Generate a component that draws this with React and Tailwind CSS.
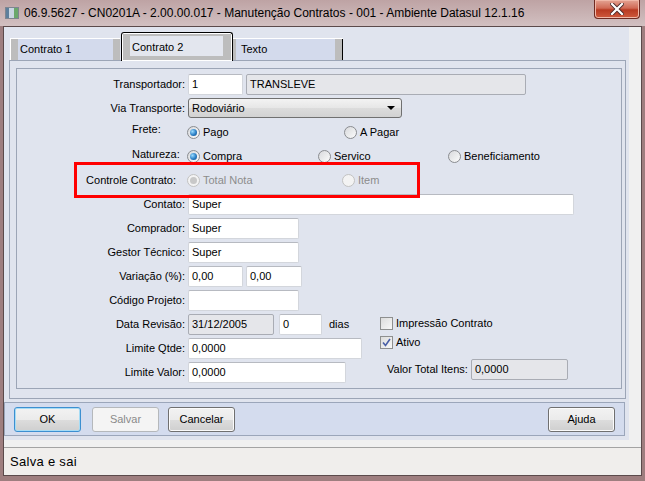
import React from 'react';

const sans = { fontFamily: '"Liberation Sans", Arial, sans-serif' };

function Radio({ checked, disabled }) {
  return (
    <span
      className={
        disabled
          ? 'flex h-[13px] w-[13px] shrink-0 items-center justify-center rounded-full border border-[#c2c2c2] bg-[#f3f3f3]'
          : 'flex h-[13px] w-[13px] shrink-0 items-center justify-center rounded-full border border-[#8a8c90] bg-[linear-gradient(135deg,#d8d9dc,#fbfbfb)]'
      }
    >
      {checked && (
        <span
          className={
            disabled
              ? 'h-[7px] w-[7px] rounded-full bg-[#c8c8c8]'
              : 'h-[7px] w-[7px] rounded-full bg-[radial-gradient(circle_at_35%_35%,#9bdcff,#2a7fc6_55%,#12457e)]'
          }
        />
      )}
    </span>
  );
}

function Option({ label, checked, disabled, className = '' }) {
  return (
    <span className={'flex items-center gap-[3px] ' + className}>
      <Radio checked={checked} disabled={disabled} />
      <span className={disabled ? 'text-[#8c8c8c]' : 'text-black'}>{label}</span>
    </span>
  );
}

function Check({ checked }) {
  return (
    <span className="flex h-[13px] w-[13px] shrink-0 items-center justify-center border border-[#8e8f8f] bg-[linear-gradient(135deg,#dcdcdc,#f8f8f8)]">
      {checked && (
        <svg width="9" height="9" viewBox="0 0 9 9">
          <path d="M1 4.5 L3.5 7.5 L8 1" fill="none" stroke="#4a5fa6" strokeWidth="1.6" />
        </svg>
      )}
    </span>
  );
}

function Field({ value, className = '', disabled }) {
  return (
    <div
      className={
        (disabled
          ? 'flex h-[21px] items-center rounded-[2px] border border-[#a9acb4] bg-[#e5e6ea] pl-[3px] '
          : 'flex h-[21px] items-center rounded-[2px] border border-[#d3d6dc] border-t-[#b7bac1] bg-white pl-[3px] ') + className
      }
    >
      {value}
    </div>
  );
}

function Row({ label, labelClass = 'w-[168px] text-right', children }) {
  return (
    <div className="flex h-[24px] items-center">
      <span className={'shrink-0 ' + labelClass}>{label}</span>
      <div className="ml-[3px] flex items-center">{children}</div>
    </div>
  );
}

function Button({ children, focused, disabled }) {
  const base = 'flex h-[25px] w-[67px] items-center justify-center rounded-[3px] border text-[11px] ';
  if (disabled)
    return <div className={base + 'border-[#b5b8bb] bg-[#f4f4f4] text-[#8a8a8a]'}>{children}</div>;
  return (
    <div
      className={
        base +
        (focused
          ? 'border-[#3c8fd0] bg-[linear-gradient(180deg,#f2f2f2_0%,#ebebeb_50%,#dddddd_50%,#cfcfcf_100%)] text-black shadow-[inset_0_0_0_1px_#a6dcf5]'
          : 'border-[#707070] bg-[linear-gradient(180deg,#f2f2f2_0%,#ebebeb_50%,#dddddd_50%,#cfcfcf_100%)] text-black shadow-[inset_0_0_0_1px_#fbfbfb]')
      }
    >
      {children}
    </div>
  );
}

function Tab({ label, active, first }) {
  if (active)
    return (
      <div className="relative z-10 flex h-[29px] w-[112px] rounded-t-[3px] border border-b-0 border-black bg-white p-px">
        <div className="flex flex-1 border-[#bdbdbd] border-l-[7px] border-t-[2px] border-r-[8px] border-b-[4px] bg-[#e3e6ee] pl-[2px] pt-[3px]">
          {label}
        </div>
      </div>
    );
  return (
    <div className="mt-[3px] flex h-[23px] w-[110px] border-t border-white border-b border-b-black">
      <div className={first ? 'w-[8px] bg-[#bdbdbd] border-l border-white' : 'w-[3px] bg-[#bdbdbd]'} />
      <div className={first ? 'flex flex-1 items-center bg-[#d3daec] pl-[2px]' : 'flex flex-1 items-center bg-[#d3daec] pl-[5px]'}>{label}</div>
      <div className={first ? 'w-[7px] bg-[#bdbdbd]' : 'w-[8px] bg-[#bdbdbd] border-r border-black'} />
    </div>
  );
}

export default function App() {
  return (
    <div className="flex h-[481px] w-[645px] flex-col overflow-hidden bg-[#9e7e7f] text-[11px] text-black" style={sans}>
      {/* title bar */}
      <div className="flex h-[26px] shrink-0 items-start bg-[linear-gradient(180deg,#bea3a4,#d2c0c1)]">
        <div className="ml-[5px] mt-[7px] flex h-[12px] w-[14px] border border-[#7d8590] bg-[#eef0f2]">
          <div className="w-[3px] bg-[#5d7f9c]" />
          <div className="w-[5px] bg-[#c9d6e2]" />
          <div className="w-[4px] bg-[#6aa86c]" />
        </div>
        <span className="ml-[5px] mt-[5px] text-[12px] leading-[16px] text-black">
          06.9.5627 - CN0201A - 2.00.00.017 - Manutenção Contratos - 001 - Ambiente Datasul 12.1.16
        </span>
        <div className="ml-auto mr-[5px] flex h-[19px] w-[46px] items-center justify-center rounded-b-[4px] border border-t-0 border-[#6e2a22] bg-[linear-gradient(180deg,#e4a494_0%,#d06a55_45%,#b83a22_55%,#cf5a3e_100%)] shadow-[inset_0_0_0_1px_#f0b8a8]">
          <svg width="14" height="12" viewBox="0 0 14 12">
            <path d="M2 1 L12 11 M12 1 L2 11" stroke="#4a2a2a" strokeWidth="4" strokeLinecap="square" />
            <path d="M2 1 L12 11 M12 1 L2 11" stroke="#ffffff" strokeWidth="2.2" strokeLinecap="square" />
          </svg>
        </div>
      </div>

      {/* client area */}
      <div className="ml-[3px] mr-[3px] flex h-[450px] flex-col border border-[#5b4a4b] bg-[#f0f0f0]">
        <div className="flex">
          <div className="flex h-[413px] w-[625px] flex-col bg-[#e0e4ee]">
            {/* tabs */}
            <div className="flex h-[25px] pl-[6px] pt-[8px] box-content">
              <Tab label="Contrato 1" first />
              <div className="-mt-[3px] ml-px">
                <Tab label="Contrato 2" active />
              </div>
              <Tab label="Texto" />
            </div>

            {/* tab page */}
            <div className="ml-[5px] h-[339px] w-[617px] border border-[#9ca5b6] pl-[6px] pt-[7px]">
              <div className="relative h-[321px] w-[606px] border border-[#9ca5b6] pt-[3px]">
                <Row label="Transportador:">
                  <Field value="1" className="w-[55px]" />
                  <Field value="TRANSLEVE" className="ml-[3px] w-[280px]" disabled />
                </Row>
                <Row label="Via Transporte:">
                  <div className="flex h-[20px] w-[214px] items-center justify-between rounded-[3px] border border-[#707070] bg-[linear-gradient(180deg,#f3f3f3,#e6e6e6_50%,#dcdcdc_50%,#d2d2d2)] pl-[3px] pr-[6px]">
                    <span>Rodoviário</span>
                    <svg width="8" height="4" viewBox="0 0 8 4">
                      <path d="M0 0 H8 L4 4 Z" fill="#000" />
                    </svg>
                  </div>
                </Row>
                <Row label="Frete:" labelClass="w-[168px] pl-[115px] pb-[6px]">
                  <Option label="Pago" checked className="w-[157px] -ml-px" />
                  <Option label="A Pagar" />
                </Row>
                <Row label="Natureza:" labelClass="w-[168px] pl-[115px] pb-[4px]">
                  <Option label="Compra" checked className="w-[131px] -ml-px" />
                  <Option label="Servico" className="w-[130px]" />
                  <Option label="Beneficiamento" />
                </Row>
                <Row label="Controle Contrato:" labelClass="w-[168px] pr-[9px] text-right">
                  <Option label="Total Nota" checked disabled className="w-[155px] -ml-px" />
                  <Option label="Item" disabled />
                </Row>
                <Row label="Contato:">
                  <Field value="Super" className="w-[386px]" />
                </Row>
                <Row label="Comprador:">
                  <Field value="Super" className="w-[111px]" />
                </Row>
                <Row label="Gestor Técnico:">
                  <Field value="Super" className="w-[111px]" />
                </Row>
                <Row label="Variação (%):">
                  <Field value="0,00" className="w-[55px]" />
                  <Field value="0,00" className="ml-[3px] w-[56px]" />
                </Row>
                <Row label="Código Projeto:">
                  <Field value="" className="w-[111px]" />
                </Row>

                <div className="flex">
                  <div className="w-[363px] shrink-0">
                    <Row label="Data Revisão:">
                      <Field value="31/12/2005" className="w-[86px]" disabled />
                      <Field value="0" className="ml-[5px] w-[43px]" />
                      <span className="ml-[7px]">dias</span>
                    </Row>
                    <Row label="Limite Qtde:">
                      <Field value="0,0000" className="w-[174px]" />
                    </Row>
                    <Row label="Limite Valor:">
                      <Field value="0,0000" className="w-[158px]" />
                    </Row>
                  </div>
                  <div className="flex flex-col">
                    <div className="flex h-[22px] items-center gap-[3px]">
                      <Check />
                      <span>Impressão Contrato</span>
                    </div>
                    <div className="flex h-[16px] items-center gap-[3px]">
                      <Check checked />
                      <span>Ativo</span>
                    </div>
                    <div className="mt-[9px] flex h-[21px] items-center pl-[7px]">
                      <span>Valor Total Itens:</span>
                      <Field value="0,0000" className="ml-[3px] w-[97px]" disabled />
                    </div>
                  </div>
                </div>

                {/* highlight frame */}
                <div className="pointer-events-none absolute left-[57px] top-[93px] h-[36px] w-[346px] border-[3px] border-[#ff0000]" />
              </div>
            </div>

            {/* button bar */}
            <div className="mt-[3px] flex h-[34px] w-[621px] items-center border border-[#9ba6ba] bg-[#d4dcee] pl-[9px] pr-[9px]">
              <Button focused>OK</Button>
              <div className="ml-[11px]">
                <Button disabled>Salvar</Button>
              </div>
              <div className="ml-[9px]">
                <Button>Cancelar</Button>
              </div>
              <div className="ml-auto">
                <Button>Ajuda</Button>
              </div>
            </div>
          </div>
          <div className="flex-1" />
        </div>

        {/* status bar */}
        <div className="mt-auto flex h-[28px] items-center border-t border-[#a3a3a3] bg-[#f0eeec] pl-[6px] text-[13px] tracking-[0.3px]">
          Salva e sai
        </div>
      </div>
    </div>
  );
}
